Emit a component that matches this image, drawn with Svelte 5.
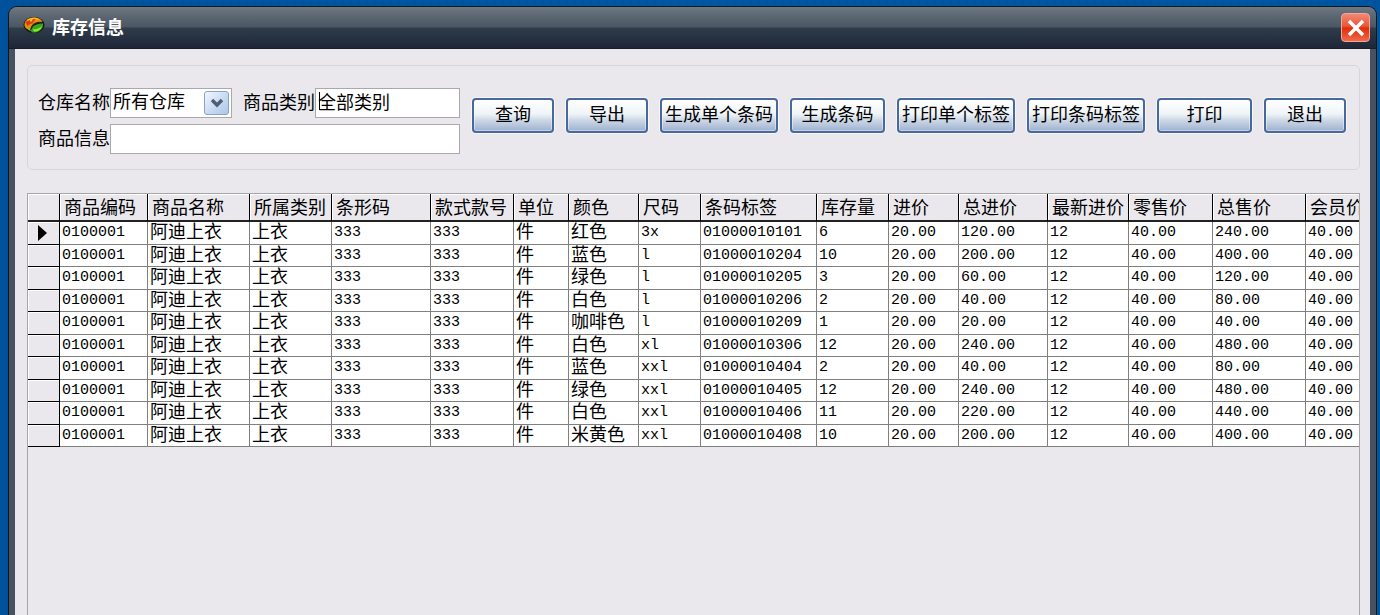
<script lang="ts">
  type Column = { key: string; title: string; width: number; cjk?: boolean }

  const columns: Column[] = [
    { key: 'code', title: '商品编码', width: 88 },
    { key: 'name', title: '商品名称', width: 102, cjk: true },
    { key: 'category', title: '所属类别', width: 82, cjk: true },
    { key: 'barcode', title: '条形码', width: 99 },
    { key: 'style', title: '款式款号', width: 83 },
    { key: 'unit', title: '单位', width: 55, cjk: true },
    { key: 'color', title: '颜色', width: 70, cjk: true },
    { key: 'size', title: '尺码', width: 62 },
    { key: 'tag', title: '条码标签', width: 116 },
    { key: 'stock', title: '库存量', width: 72 },
    { key: 'cost', title: '进价', width: 70 },
    { key: 'costTotal', title: '总进价', width: 89 },
    { key: 'lastCost', title: '最新进价', width: 81 },
    { key: 'retail', title: '零售价', width: 84 },
    { key: 'retailTotal', title: '总售价', width: 93 },
    { key: 'member', title: '会员价', width: 84 },
  ]

  const items: [string, string, string, number][] = [
    ['红色', '3x', '01000010101', 6],
    ['蓝色', 'l', '01000010204', 10],
    ['绿色', 'l', '01000010205', 3],
    ['白色', 'l', '01000010206', 2],
    ['咖啡色', 'l', '01000010209', 1],
    ['白色', 'xl', '01000010306', 12],
    ['蓝色', 'xxl', '01000010404', 2],
    ['绿色', 'xxl', '01000010405', 12],
    ['白色', 'xxl', '01000010406', 11],
    ['米黄色', 'xxl', '01000010408', 10],
  ]

  const rows: Record<string, string | number>[] = items.map(([color, size, tag, stock]) => ({
    code: '0100001',
    name: '阿迪上衣',
    category: '上衣',
    barcode: '333',
    style: '333',
    unit: '件',
    color,
    size,
    tag,
    stock,
    cost: '20.00',
    costTotal: (stock * 20).toFixed(2),
    lastCost: '12',
    retail: '40.00',
    retailTotal: (stock * 40).toFixed(2),
    member: '40.00',
  }))

  const actions = [
    { label: '查询', size: 'small' },
    { label: '导出', size: 'small' },
    { label: '生成单个条码', size: 'large' },
    { label: '生成条码', size: 'medium' },
    { label: '打印单个标签', size: 'large' },
    { label: '打印条码标签', size: 'large' },
    { label: '打印', size: 'medium' },
    { label: '退出', size: 'small' },
  ]

  let warehouse = $state('所有仓库')
  let category = $state('全部类别')
  let keyword = $state('')
  let current = $state(0)
</script>

<div class="desktop">
  <main class="window">
    <header class="titlebar">
      <svg class="logo" viewBox="0 0 22 18" aria-hidden="true">
        <ellipse cx="11" cy="9" rx="10.500" ry="8" fill="#151c12" />
        <path d="M1.500 8C2 4 6 1.500 11 1.500c4 0 7.500 1.500 8.500 4.500-5-.5-9 1.500-11 6-1.500 3-7.500 1-7-4z" fill="#e88a10" />
        <path d="M4 4c4-3 9-3 13-.5-4 0-8 1-10 4z" fill="#f4bd20" />
        <path d="M2.500 6l4-2 2 3-4 3z" fill="#d93a12" />
        <path d="M10 3l3 0-4 5-2 0z" fill="#d9480f" />
        <path d="M3 11l4 2 1 2c-2-.5-4-2-5-4z" fill="#7fc52b" />
        <path d="M8 15c0-4 5-8 12-7.500C21 12 16 17 11 16.500 9.500 16.500 8.500 16 8 15z" fill="#35a51d" />
        <path d="M10 13c3 .5 7-.5 9-3-.5 3.500-4 5.500-8 5.500z" fill="#91e636" />
        <path d="M8 13c1-5 6-7.500 11.500-6.500" fill="none" stroke="#20240f" stroke-width="1.200" />
      </svg>
      <h1>库存信息</h1>
      <button class="close" type="button" aria-label="关闭">
        <svg viewBox="0 0 18 18" aria-hidden="true">
          <path d="M2 2L16 16M16 2L2 16" stroke="#fff" stroke-width="3.400" />
        </svg>
      </button>
    </header>

    <div class="content">
      <form class="panel" onsubmit={(e) => e.preventDefault()}>
        <div class="fields">
          <div class="line">
            <label for="warehouse">仓库名称</label>
            <div class="combo">
              <select id="warehouse" bind:value={warehouse}>
                <option>所有仓库</option>
              </select>
              <span class="arrow">
                <svg viewBox="0 0 14 10" aria-hidden="true">
                  <path d="M2 2l5 5 5-5" fill="none" stroke="#4d5d78" stroke-width="3.400" />
                </svg>
              </span>
            </div>
            <label class="second" for="category">商品类别</label>
            <div class="edit">
              <input id="category" type="text" bind:value={category} />
              <span class="caret"></span>
            </div>
          </div>
          <div class="line">
            <label for="keyword">商品信息</label>
            <div class="edit">
              <input id="keyword" type="text" bind:value={keyword} />
            </div>
          </div>
        </div>

        <div class="actions">
          {#each actions as action}
            <button type="button" class="action {action.size}">{action.label}</button>
          {/each}
        </div>
      </form>

      <div class="grid">
        <table>
          <colgroup>
            <col class="marker-col" />
            {#each columns as column}
              <col style="width: {column.width}px" />
            {/each}
          </colgroup>
          <thead>
            <tr>
              <th></th>
              {#each columns as column}
                <th scope="col">{column.title}</th>
              {/each}
            </tr>
          </thead>
          <tbody>
            {#each rows as row, i}
              <tr onclick={() => (current = i)}>
                <td class="marker">
                  {#if i === current}
                    <svg viewBox="0 0 10 16" aria-hidden="true"><path d="M0 0L9 8L0 16z" /></svg>
                  {/if}
                </td>
                {#each columns as column}
                  <td class:cjk={column.cjk}>{row[column.key]}</td>
                {/each}
              </tr>
            {/each}
          </tbody>
        </table>
      </div>
    </div>
  </main>
</div>

<style>
  :global(body) {
    margin: 0;
  }

  .desktop,
  .desktop * {
    box-sizing: border-box;
  }

  .desktop {
    display: flex;
    min-height: 100vh;
    padding: 6px 3px 0 8px;
    background:
      repeating-linear-gradient(90deg, transparent 0 6px, rgba(0, 40, 110, 0.08) 6px 8px),
      linear-gradient(90deg, #00529c, #0058a4 50%, #0055a0);
    font-family: 'Liberation Mono', 'Noto Sans CJK SC', monospace;
    font-size: 18px;
    line-height: 22px;
    color: #000;
  }

  .window {
    display: flex;
    flex: 1;
    flex-direction: column;
    min-width: 0;
    border: 1px solid #11161f;
    border-bottom: 0;
    border-radius: 9px 9px 0 0;
    background: #465260;
    overflow: hidden;
  }

  /* Title bar */

  .titlebar {
    display: flex;
    align-items: center;
    height: 42px;
    padding: 0 6px 0 14px;
    border-bottom: 1px solid #171d29;
    background: linear-gradient(#6f7982, #5d6873 20%, #4b5763 48%, #303c4a 52%, #263141 75%, #1f2737);
  }

  .logo {
    width: 22px;
    height: 18px;
    margin-bottom: 6px;
  }

  h1 {
    flex: 1;
    margin: 0 0 4px 7px;
    font-family: 'Noto Sans CJK SC', sans-serif;
    font-size: 18px;
    font-weight: 700;
    color: #fff;
  }

  .close {
    display: grid;
    place-items: center;
    width: 29px;
    height: 29px;
    padding: 0;
    border: 1px solid #f8a694;
    border-radius: 4px;
    background: linear-gradient(#f08a72, #e8563a 45%, #e22c08 52%, #ee6a4c);
  }

  .close svg {
    width: 18px;
    height: 18px;
  }

  /* Search panel */

  .content {
    display: flex;
    flex: 1;
    flex-direction: column;
    margin: 0 6px;
    padding: 16px 10px 0 12px;
    background: #eae8ed;
  }

  .panel {
    display: flex;
    align-items: flex-start;
    gap: 12px;
    height: 105px;
    padding: 22px 10px;
    border: 1px solid #d6d6d9;
    border-radius: 5px;
  }

  .fields {
    display: flex;
    flex: none;
    flex-direction: column;
    gap: 6px;
    width: 422px;
  }

  .line {
    display: flex;
    align-items: center;
    height: 30px;
  }

  label {
    flex: none;
    width: 72px;
    padding-top: 2px;
    white-space: nowrap;
  }

  .second {
    margin-left: 11px;
  }

  .combo {
    position: relative;
    width: 122px;
  }

  .edit {
    position: relative;
    flex: 1;
  }

  select,
  input {
    display: block;
    width: 100%;
    height: 30px;
    margin: 0;
    padding: 0 2px;
    border: 1px solid #a9a9ad;
    border-radius: 0;
    background: #fff;
    font: inherit;
    color: inherit;
    outline: 0;
    appearance: none;
  }

  input {
    padding-bottom: 5px;
  }

  .arrow {
    position: absolute;
    top: 3px;
    right: 3px;
    display: grid;
    place-items: center;
    width: 25px;
    height: 24px;
    border: 1px solid #86a3cb;
    border-radius: 3px;
    background: linear-gradient(135deg, #f3f7fd, #c9daf1 55%, #aec6e8);
    pointer-events: none;
  }

  .arrow svg {
    width: 14px;
    height: 10px;
  }

  .caret {
    position: absolute;
    top: 4px;
    left: 4px;
    width: 1px;
    height: 18px;
    background: #000;
  }

  .actions {
    display: flex;
    gap: 12px;
    padding-top: 10px;
  }

  .action {
    height: 35px;
    padding: 0;
    border: 2px solid #48699d;
    border-radius: 4px;
    background: linear-gradient(#fff, #eff4f8 45%, #cdd8e6 65%, #9fb1d0);
    box-shadow:
      0 0 0 1px #f6f6f8,
      inset 0 0 0 1px rgba(255, 255, 255, 0.4);
    font: inherit;
    color: inherit;
    white-space: nowrap;
  }

  .small {
    width: 82px;
  }

  .medium {
    width: 95px;
  }

  .large {
    width: 118px;
  }

  /* Data grid */

  .grid {
    flex: 1;
    margin-top: 23px;
    border: 1px solid #a6a6a9;
    border-bottom: 0;
    overflow: hidden;
  }

  table {
    width: 0;
    border-spacing: 0;
    table-layout: fixed;
  }

  .marker-col {
    width: 32px;
  }

  th,
  td {
    padding: 0;
    text-align: left;
    white-space: nowrap;
    overflow: hidden;
  }

  th {
    height: 28px;
    padding: 4px 0 0 4px;
    border-right: 1px solid #000;
    border-bottom: 2px solid #222;
    background: #eae8ed;
    box-shadow: inset 1px 1px #fff;
    font-weight: 400;
  }

  td {
    height: 22px;
    padding-left: 2px;
    border-right: 1px solid #808080;
    border-bottom: 1px solid #808080;
    background: #fff;
    font-size: 15px;
    line-height: 18px;
  }

  tr:nth-child(odd) td {
    height: 23px;
  }

  .cjk {
    font-size: 18px;
  }

  .marker {
    padding-left: 10px;
    border-color: #000;
    background: #eae8ed;
    box-shadow: inset 1px 1px #fff;
  }

  .marker svg {
    display: block;
    width: 10px;
    height: 16px;
  }
</style>
